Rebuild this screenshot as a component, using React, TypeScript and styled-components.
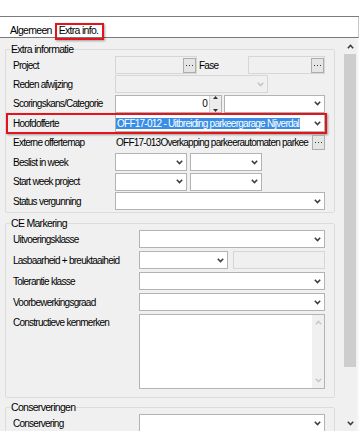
import React from 'react';
import styled, { createGlobalStyle } from 'styled-components';

const GlobalStyle = createGlobalStyle`
  html, body { margin: 0; padding: 0; background: #fff; }
  body {
    font-family: "Liberation Sans", Arial, sans-serif;
    font-size: 10px;
    letter-spacing: -0.75px;
    color: #000;
  }
`;

const Window = styled.div`
  width: 359px;
  height: 431px;
  overflow: hidden;
  display: flex;
  flex-direction: column;
  background: #fff;
`;

const TopStrip = styled.div`
  height: 16px;
  border-bottom: 1px solid #7c7c7c;
`;

const TabBar = styled.div`
  position: relative;
  height: 21px;
  box-sizing: border-box;
  border-bottom: 1px solid #7a7a7a;
  border-right: 1px solid #c9c9c9;
  display: flex;
  align-items: flex-end;
  padding-left: 8px;
`;

const Tab = styled.div<{ $marked?: boolean }>`
  position: relative;
  padding: 0 3px 0 2px;
  margin-right: 2px;
  line-height: 13px;
  font-size: 10.5px;
  letter-spacing: -0.7px;

  ${(p) =>
    p.$marked &&
    `
    &::after {
      content: '';
      position: absolute;
      left: -2px;
      right: -3px;
      top: -1px;
      bottom: -3px;
      border: 2px solid #e3141c;
      box-shadow: 1px 1px 2px rgba(0, 0, 0, 0.35);
    }
  `}
`;

const Body = styled.div`
  flex: 1;
  display: flex;
  background: #f0f0f0;
  min-height: 0;
`;

const Content = styled.div`
  width: 343px;
  padding-top: 2px;
  overflow: hidden;
`;

const ScrollBar = styled.div`
  width: 14px;
  display: flex;
  flex-direction: column;
  align-items: center;
  background: #f0f0f0;
  border-right: 2px solid #f7f7f7;
`;

const ScrollArrow = styled.div`
  height: 16px;
  display: flex;
  align-items: center;
  justify-content: center;
`;

const ScrollThumb = styled.div`
  width: 12px;
  height: 313px;
  background: #cdcdcd;
`;

const ScrollTrack = styled.div`
  flex: 1;
`;

const Group = styled.fieldset<{ $top: number }>`
  margin: ${(p) => p.$top}px 8px 0 5px;
  padding: 0;
  min-inline-size: 0;
  border: 1px solid #dcdcdc;
  border-radius: 2px;
`;

const Legend = styled.legend`
  margin-left: 4px;
  padding: 0 1px;
  line-height: 13px;
  font-size: 10.5px;
  letter-spacing: -0.7px;
`;

const GroupInner = styled.div<{ $bottom: number; $gap: number }>`
  padding: 0 9px ${(p) => p.$bottom}px 7px;
  display: flex;
  flex-direction: column;
  gap: ${(p) => p.$gap}px;
`;

const Row = styled.div<{ $label: number; $tall?: boolean; $marked?: boolean }>`
  position: relative;
  display: grid;
  grid-template-columns: ${(p) => p.$label}px 1fr;
  align-items: ${(p) => (p.$tall ? 'start' : 'center')};
  min-height: 18px;

  ${(p) =>
    p.$marked &&
    `
    &::after {
      content: '';
      position: absolute;
      left: -7px;
      right: -2px;
      top: -1px;
      bottom: -2px;
      border: 2px solid #e3141c;
      box-shadow: 1px 1px 2px rgba(0, 0, 0, 0.35);
      pointer-events: none;
    }
  `}
`;

const Label = styled.div<{ $tall?: boolean }>`
  white-space: nowrap;
  padding-top: ${(p) => (p.$tall ? '3px' : '0')};
`;

const Controls = styled.div<{ $gap?: number }>`
  display: flex;
  align-items: center;
  gap: ${(p) => p.$gap ?? 0}px;
  min-width: 0;
`;

const Field = styled.div<{ $w?: number; $disabled?: boolean }>`
  box-sizing: border-box;
  height: 18px;
  width: ${(p) => (p.$w ? `${p.$w}px` : 'auto')};
  flex: ${(p) => (p.$w ? 'none' : '1')};
  min-width: 0;
  display: flex;
  align-items: center;
  border: 1px solid ${(p) => (p.$disabled ? '#d6d6d6' : '#b3b3b3')};
  background: ${(p) => (p.$disabled ? '#f0f0f0' : '#fff')};
  overflow: hidden;
`;

const FieldText = styled.div`
  flex: 1;
  min-width: 0;
  white-space: nowrap;
  overflow: hidden;
  padding-left: 0;
`;

const NumberText = styled(FieldText)`
  text-align: right;
  padding-right: 2px;
`;

const Selected = styled.span`
  background: #3a8ee6;
  color: #fff;
  padding: 0 1px;
`;

const Chevron = styled.div`
  width: 14px;
  display: flex;
  justify-content: center;
  align-items: center;
  flex: none;
`;

const DotsButton = styled.div`
  box-sizing: border-box;
  width: 13px;
  height: 15px;
  flex: none;
  border: 1px solid #adadad;
  background: #e5e5e5;
  display: flex;
  align-items: center;
  justify-content: center;
`;

const Spinner = styled.div`
  width: 11px;
  height: 16px;
  flex: none;
  display: flex;
  flex-direction: column;
  justify-content: space-between;
  align-items: center;
  border-left: 1px solid #d0d0d0;
  background: #ececec;
`;

const PlainText = styled.div`
  flex: 1;
  min-width: 0;
  white-space: nowrap;
  padding-left: 1px;
`;

const FaseLabel = styled.div`
  flex: 1;
  padding-left: 2px;
`;

const TextArea = styled.div`
  box-sizing: border-box;
  height: 75px;
  border: 1px solid #b3b3b3;
  background: #fff;
  display: flex;
  justify-content: flex-end;
`;

const TextAreaScroll = styled.div`
  width: 12px;
  background: #f0f0f0;
  display: flex;
  flex-direction: column;
  justify-content: space-between;
  align-items: center;
  padding: 5px 0;
`;

const Down = ({ color = '#3c3c3c' }: { color?: string }) => (
  <svg width="7" height="5" viewBox="0 0 7 5">
    <polyline points="0.8,0.8 3.5,3.6 6.2,0.8" fill="none" stroke={color} strokeWidth="1.5" />
  </svg>
);

const Up = ({ color = '#3c3c3c' }: { color?: string }) => (
  <svg width="7" height="5" viewBox="0 0 7 5">
    <polyline points="0.8,4.2 3.5,1.4 6.2,4.2" fill="none" stroke={color} strokeWidth="1.5" />
  </svg>
);

const Dots = () => (
  <svg width="7" height="3" viewBox="0 0 7 3">
    <rect x="0" y="1" width="1" height="1" fill="#333" />
    <rect x="3" y="1" width="1" height="1" fill="#333" />
    <rect x="6" y="1" width="1" height="1" fill="#333" />
  </svg>
);

const Tri = ({ up }: { up?: boolean }) => (
  <svg width="5" height="3" viewBox="0 0 5 3">
    <polygon points={up ? '0,3 2.5,0 5,3' : '0,0 2.5,3 5,0'} fill="#333" />
  </svg>
);

const Select = ({ w, disabled, children }: { w?: number; disabled?: boolean; children?: React.ReactNode }) => (
  <Field $w={w} $disabled={disabled}>
    <FieldText>{children}</FieldText>
    <Chevron>
      <Down color={disabled ? '#c4c4c4' : '#3c3c3c'} />
    </Chevron>
  </Field>
);

const LookupField = ({ w }: { w?: number }) => (
  <Field $w={w} $disabled>
    <FieldText />
    <DotsButton>
      <Dots />
    </DotsButton>
  </Field>
);

export default function App() {
  return (
    <>
      <GlobalStyle />
      <Window>
        <TopStrip />
        <TabBar>
          <Tab>Algemeen</Tab>
          <Tab $marked>Extra info.</Tab>
        </TabBar>
        <Body>
          <Content>
            <Group $top={3}>
              <Legend>Extra informatie</Legend>
              <GroupInner $bottom={2} $gap={1.45}>
                <Row $label={102}>
                  <Label>Project</Label>
                  <Controls>
                    <LookupField w={82} />
                    <FaseLabel>Fase</FaseLabel>
                    <LookupField w={77} />
                  </Controls>
                </Row>
                <Row $label={102}>
                  <Label>Reden afwijzing</Label>
                  <Controls>
                    <Select w={153} disabled />
                  </Controls>
                </Row>
                <Row $label={102}>
                  <Label>Scoringskans/Categorie</Label>
                  <Controls $gap={2}>
                    <Field $w={107}>
                      <NumberText>0</NumberText>
                      <Spinner>
                        <Tri up />
                        <Tri />
                      </Spinner>
                    </Field>
                    <Select />
                  </Controls>
                </Row>
                <Row $label={102} $marked>
                  <Label>Hoofdofferte</Label>
                  <Controls>
                    <Select>
                      <Selected>OFF17-012 - Uitbreiding parkeergarage Nijverdal</Selected>
                    </Select>
                  </Controls>
                </Row>
                <Row $label={102}>
                  <Label>Externe offertemap</Label>
                  <Controls $gap={2}>
                    <PlainText>OFF17-013Overkapping parkeerautomaten parkee</PlainText>
                    <DotsButton>
                      <Dots />
                    </DotsButton>
                  </Controls>
                </Row>
                <Row $label={102}>
                  <Label>Beslist in week</Label>
                  <Controls $gap={3}>
                    <Select w={72} />
                    <Select w={72} />
                  </Controls>
                </Row>
                <Row $label={102}>
                  <Label>Start week project</Label>
                  <Controls $gap={3}>
                    <Select w={72} />
                    <Select w={72} />
                  </Controls>
                </Row>
                <Row $label={102}>
                  <Label>Status vergunning</Label>
                  <Controls>
                    <Select />
                  </Controls>
                </Row>
              </GroupInner>
            </Group>

            <Group $top={4}>
              <Legend>CE Markering</Legend>
              <GroupInner $bottom={8} $gap={3}>
                <Row $label={126}>
                  <Label>Uitvoeringsklasse</Label>
                  <Controls>
                    <Select />
                  </Controls>
                </Row>
                <Row $label={126}>
                  <Label>Lasbaarheid + breuktaaiheid</Label>
                  <Controls $gap={5}>
                    <Select w={89} />
                    <Field $disabled />
                  </Controls>
                </Row>
                <Row $label={126}>
                  <Label>Tolerantie klasse</Label>
                  <Controls>
                    <Select />
                  </Controls>
                </Row>
                <Row $label={126}>
                  <Label>Voorbewerkingsgraad</Label>
                  <Controls>
                    <Select />
                  </Controls>
                </Row>
                <Row $label={126} $tall>
                  <Label $tall>Constructieve kenmerken</Label>
                  <TextArea>
                    <TextAreaScroll>
                      <Up color="#c8c8c8" />
                      <Down color="#c8c8c8" />
                    </TextAreaScroll>
                  </TextArea>
                </Row>
              </GroupInner>
            </Group>

            <Group $top={3}>
              <Legend>Conserveringen</Legend>
              <GroupInner $bottom={8} $gap={3}>
                <Row $label={126}>
                  <Label>Conservering</Label>
                  <Controls>
                    <Select />
                  </Controls>
                </Row>
              </GroupInner>
            </Group>
          </Content>
          <ScrollBar>
            <ScrollArrow>
              <Up />
            </ScrollArrow>
            <ScrollThumb />
            <ScrollTrack />
            <ScrollArrow>
              <Down />
            </ScrollArrow>
          </ScrollBar>
        </Body>
      </Window>
    </>
  );
}
